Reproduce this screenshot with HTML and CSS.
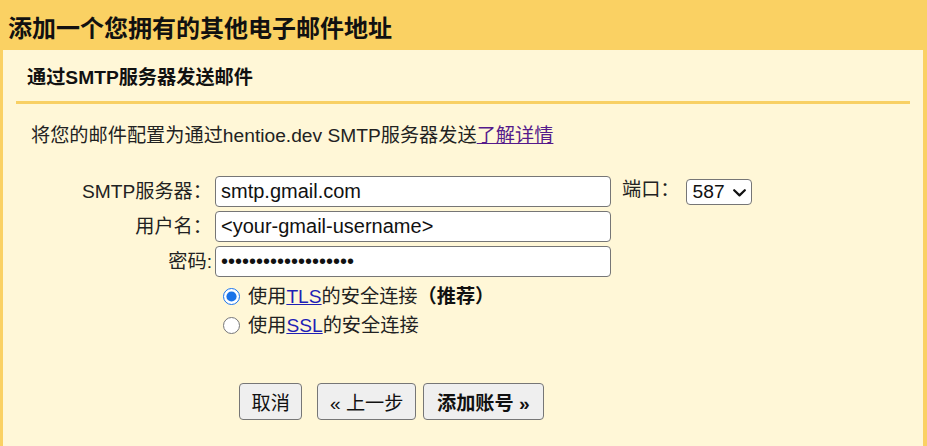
FILE: index.html
```html
<!DOCTYPE html>
<html lang="zh-CN">
<head>
<meta charset="utf-8">
<title>添加一个您拥有的其他电子邮件地址</title>
<link rel="stylesheet" href="styles.css">
</head>
<body>
<div class="title">添加一个您拥有的其他电子邮件地址</div>
<div class="panel">
  <div class="subtitle">通过SMTP服务器发送邮件</div>
  <div class="rule"></div>
  <div class="desc">将您的邮件配置为通过hentioe.dev SMTP服务器发送<a class="visited" href="#">了解详情</a></div>
  <form class="form">
    <label class="lbl" for="smtp">SMTP服务器：</label>
    <input class="field" id="smtp" type="text" value="smtp.gmail.com">
    <label class="port-lbl" for="port">端口：</label>
    <span class="select-wrap">
      <select class="port" id="port"><option>587</option><option>465</option></select>
      <svg class="chev" width="13" height="8" viewBox="0 0 13 8" aria-hidden="true"><path d="M1.2 1.2 L6.5 6.4 L11.8 1.2" fill="none" stroke="#111" stroke-width="2.2" stroke-linecap="round" stroke-linejoin="round"/></svg>
    </span>

    <label class="lbl" for="user">用户名：</label>
    <input class="field" id="user" type="text" value="&lt;your-gmail-username&gt;">
    <span class="filler"></span><span class="filler"></span>

    <label class="lbl" for="pw">密码:</label>
    <input class="field" id="pw" type="password" value="abcdefghijklmnopqrs">
    <span class="filler"></span><span class="filler"></span>

    <span class="filler"></span>
    <div class="radios">
      <label class="radio-row"><input class="radio" type="radio" name="sec" checked>使用<a class="link" href="#">TLS</a>的安全连接<b class="strong">（推荐）</b></label>
      <label class="radio-row"><input class="radio" type="radio" name="sec">使用<a class="link" href="#">SSL</a>的安全连接</label>
    </div>

    <span class="filler"></span>
    <div class="buttons">
      <button class="btn btn-cancel" type="button">取消</button>
      <button class="btn btn-back" type="button">« 上一步</button>
      <button class="btn btn-primary" type="button">添加账号 »</button>
    </div>
  </form>
</div>
</body>
</html>
```
FILE: styles.css
```css
html, body {
  margin: 0;
  padding: 0;
}
body {
  background: #fad163;
  font-family: "Liberation Sans", "Noto Sans CJK SC", sans-serif;
  color: #222;
  overflow: hidden;
  height: 446px;
}
.title {
  box-sizing: border-box;
  height: 50px;
  padding: 4px 0 0 8px;
  line-height: 50px;
  font-size: 24px;
  font-weight: bold;
  color: #111;
  white-space: nowrap;
}
.panel {
  margin: 0 4px 0 3px;
  background: #fff7d7;
  height: 396px;
}
.subtitle {
  padding: 16px 0 0 24px;
  height: 24px;
  line-height: 24px;
  font-size: 19.2px;
  font-weight: bold;
  color: #111;
  margin-bottom: 11px;
}
.rule {
  margin: 0 13px;
  height: 3px;
  background: #f8d064;
}
.desc {
  margin-top: 20px;
  padding-left: 28px;
  font-size: 19.2px;
  line-height: 24px;
}
.visited {
  color: #551a8b;
}
.link {
  color: #1f1fb5;
}
.form {
  margin: 28px 0 0 0;
  display: grid;
  grid-template-columns: 209px 396px auto auto;
  row-gap: 4px;
  column-gap: 0;
  justify-content: start;
  font-size: 19.2px;
}
.lbl {
  justify-self: end;
  align-self: center;
  line-height: 24px;
  margin-right: 0;
  white-space: nowrap;
}
.field {
  box-sizing: border-box;
  margin: 0 0 0 3px;
  width: 396px;
  height: 31px;
  padding: 0 5px;
  border: 1px solid #767676;
  border-radius: 4px;
  background: #fff;
  font-family: "Liberation Sans", "Noto Sans CJK SC", sans-serif;
  font-size: 20px;
  color: #111;
}
.port-lbl {
  align-self: start;
  line-height: 24px;
  margin: 2px 0 0 14px;
  white-space: nowrap;
}
.select-wrap {
  position: relative;
  align-self: start;
  margin: 3px 0 0 6px;
  width: 66px;
  height: 26px;
}
.port {
  display: block;
  appearance: none;
  -webkit-appearance: none;
  box-sizing: border-box;
  width: 66px;
  height: 26px;
  margin: 0;
  padding: 0 0 0 6px;
  font-family: "Liberation Sans", sans-serif;
  font-size: 19.2px;
  line-height: 24px;
  color: #111;
  border: 1px solid #767676;
  border-radius: 4px;
  background: #fff;
}
.chev {
  position: absolute;
  left: 47px;
  top: 10px;
  pointer-events: none;
}
.filler {
  display: block;
}
.radios {
  grid-column: 2 / span 3;
  margin-top: 1px;
  display: flex;
  flex-direction: column;
}
.radio-row {
  display: flex;
  align-items: center;
  height: 29px;
  line-height: 29px;
  white-space: nowrap;
}
.radio {
  width: 17px;
  height: 17px;
  margin: 0 8px 0 11px;
  accent-color: #1a73e8;
}
.strong {
  font-weight: bold;
  color: #111;
}
.buttons {
  grid-column: 2 / span 3;
  margin: 39px 0 0 27px;
  display: flex;
  align-items: center;
}
.btn {
  flex: none;
  box-sizing: border-box;
  height: 37px;
  padding: 0 12px;
  border: 1px solid #767676;
  border-radius: 4px;
  background: #efefef;
  font-family: "Liberation Sans", "Noto Sans CJK SC", sans-serif;
  font-size: 19.2px;
  color: #111;
  margin-right: 8px;
}
.btn-cancel {
  padding: 0 11.5px;
  margin-right: 15px;
}
.btn-back {
  padding: 0 11.5px;
  margin-right: 7px;
}
.btn-primary {
  font-weight: bold;
  padding: 0 13px;
}
```
